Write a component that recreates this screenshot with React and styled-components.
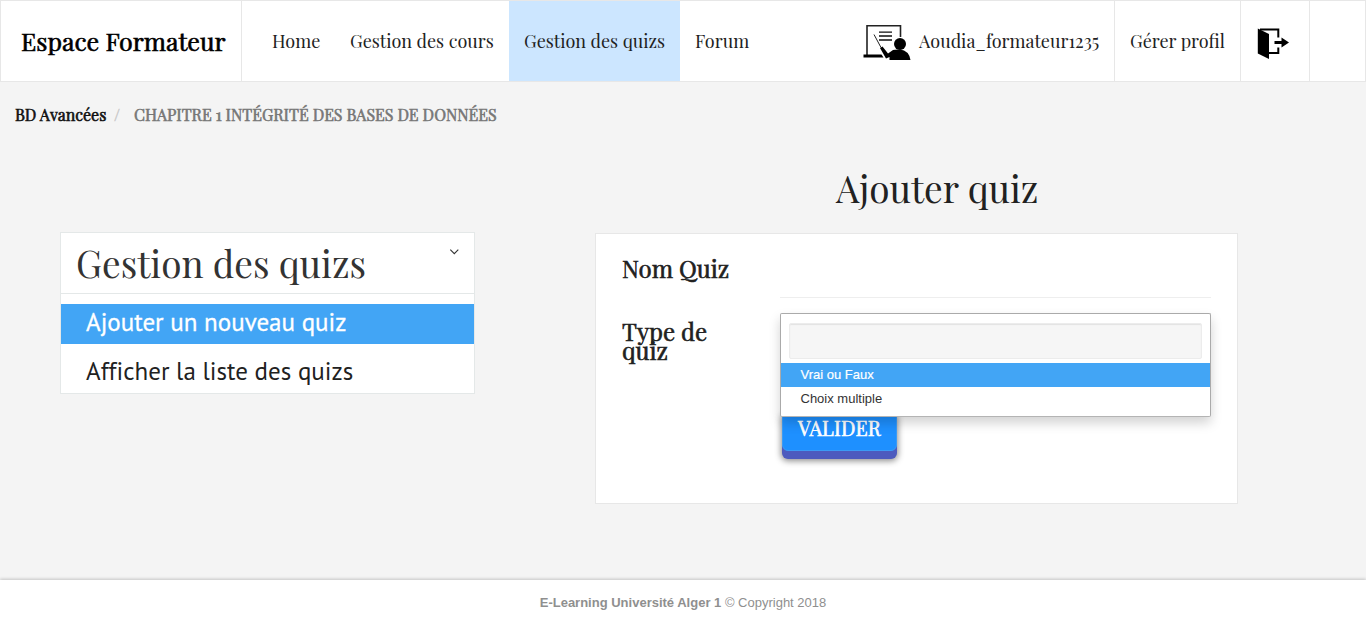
import React from "react";
import styled, { createGlobalStyle, css } from "styled-components";

const serif = `"Playfair Display", "Liberation Serif", serif`;
const sans = `"Liberation Sans", Arial, sans-serif`;
const line = "#e7e7e7";
const blue = "#42a5f5";

const Global = createGlobalStyle`
  * { box-sizing: border-box; }
  body { margin: 0; background: #f4f4f4; font-family: ${sans}; overflow: hidden; }
`;

const strong = css`
  -webkit-text-stroke: 0.6px currentColor;
`;

const Page = styled.div`
  height: 625px;
  display: flex;
  flex-direction: column;
`;

const Navbar = styled.header`
  display: flex;
  height: 82px;
  flex: none;
  background: #fff;
  border: 1px solid ${line};
  font-family: ${serif};
  color: #222;
`;

const Brand = styled.div`
  width: 241px;
  padding-left: 20px;
  border-right: 1px solid ${line};
  font-size: 25px;
  line-height: 80px;
  color: #000;
  white-space: nowrap;
  ${strong}
`;

const Nav = styled.nav`
  display: flex;
  flex: 1;
  padding-left: 15px;
`;

const NavItem = styled.a`
  width: ${(p) => p.$width}px;
  padding-left: 15px;
  font-size: 18px;
  line-height: 80px;
  white-space: nowrap;
  background: ${(p) => (p.$active ? "#cce6ff" : "transparent")};
`;

const UserArea = styled.div`
  display: flex;
`;

const UserCell = styled.div`
  display: flex;
  align-items: center;
  width: ${(p) => p.$width}px;
  padding-left: ${(p) => p.$pad || 0}px;
  gap: 8px;
  border-right: ${(p) => (p.$last ? 0 : 1)}px solid ${line};
  font-size: 18px;
  line-height: 80px;
  white-space: nowrap;

  svg {
    flex: none;
    margin-top: 4px;
  }
`;

const Breadcrumb = styled.div`
  display: flex;
  height: 68px;
  padding: 0 15px;
  font: 16px/65px ${serif};
  white-space: nowrap;
`;

const CrumbLink = styled.a`
  width: 99px;
  color: #111;
  ${strong}
`;

const Separator = styled.span`
  width: 20px;
  color: #ccc;
  ${strong}
`;

const CrumbCurrent = styled.span`
  color: #777;
  ${strong}
`;

const Main = styled.main`
  display: grid;
  grid-template-columns: 415px 643px;
  column-gap: 120px;
  padding-left: 60px;
  flex: 1;
  align-content: start;
  align-items: start;
`;

const SidePanel = styled.aside`
  margin-top: 82px;
  height: 162px;
  background: #fff;
  border: 1px solid #e4e8e8;
`;

const PanelHead = styled.div`
  display: flex;
  justify-content: space-between;
  height: 61px;
  padding: 0 14px 0 15px;
  border-bottom: 1px solid #e4e8e8;
  margin-bottom: 10px;
`;

const PanelTitle = styled.h2`
  margin: 0;
  font: 400 37px/60px ${serif};
  color: #333;
`;

const Chevron = styled.svg`
  width: 11px;
  height: 8px;
  margin-top: 15px;
`;

const MenuItem = styled.a`
  display: block;
  height: 40px;
  margin-bottom: 9px;
  padding-left: 25px;
  font: 25px/37px "PT Sans", "Noto Sans", sans-serif;
  font-variant-ligatures: none;
  white-space: nowrap;
  color: ${(p) => (p.$active ? "#fff" : "#212121")};
  background: ${(p) => (p.$active ? blue : "#fff")};
  ${(p) => p.$active && "-webkit-text-stroke: 0.3px #fff;"}
`;

const Content = styled.section`
  display: flex;
  flex-direction: column;
`;

const Title = styled.h1`
  margin: 0;
  height: 83px;
  padding-left: 241px;
  font: 400 37px/76px ${serif};
  color: #212121;
`;

const Card = styled.form`
  height: 271px;
  padding: 26px;
  background: #fff;
  border: 1px solid ${line};
`;

const Field = styled.div`
  display: grid;
  grid-template-columns: 158px 431px;
  height: ${(p) => p.$height}px;
`;

const Label = styled.label`
  width: 110px;
  margin-top: -1px;
  font: 24px/19px ${serif};
  color: #212121;
  ${strong}
`;

const TextInput = styled.input`
  height: 38px;
  padding: 0;
  border: 0;
  border-bottom: 1px solid #eee;
  background: transparent;
  outline: none;
`;

const Select = styled.div`
  position: relative;
`;

const Dropdown = styled.div`
  position: absolute;
  z-index: 2;
  top: -10px;
  left: 0;
  width: 431px;
  height: 104px;
  padding-top: 9px;
  background: #fff;
  border: 1px solid #aaa;
  border-bottom-color: #b4b4b4;
  border-radius: 2px;
  box-shadow: 0 6px 12px rgba(0, 0, 0, 0.175);
`;

const Search = styled.input`
  display: block;
  width: 413px;
  height: 36px;
  margin: 0 8px 4px;
  border: 1px solid #ececec;
  border-radius: 2px;
  background: #f6f6f6;
  box-shadow: inset 0 1px 1px rgba(0, 0, 0, 0.08);
  outline: none;
`;

const Option = styled.div`
  height: 24px;
  padding-left: 19.5px;
  font: 13px/23px ${sans};
  color: ${(p) => (p.$active ? "#fff" : "#333")};
  background: ${(p) => (p.$active ? blue : "#fff")};
  ${(p) => p.$active && "-webkit-text-stroke: 0.2px #fff;"}
`;

const Submit = styled.button`
  display: block;
  width: 115px;
  height: 46px;
  margin-left: 160px;
  padding: 0;
  border: 1px solid #3b9bf5;
  border-radius: 6px;
  background: #1e90ff;
  color: #fff;
  font: 20px/44px ${serif};
  letter-spacing: 0.2px;
  box-shadow: 0 8px 0 #4d5bbe, 0 9px 6px 1px rgba(0, 0, 0, 0.45);
  ${strong}
`;

const Footer = styled.footer`
  flex: none;
  height: 45px;
  background: #fff;
  box-shadow: 0 -1px 3px rgba(0, 0, 0, 0.2);
  text-align: center;
  font: 13px/45px ${sans};
  color: #8f8f8f;
`;

const TeacherIcon = () => (
  <svg width="48" height="36" viewBox="0 0 48 36">
    <path d="M4 30V0.8H37.5V12" fill="none" stroke="#222" strokeWidth="1.6" />
    <path d="M16 7.2H29M16 11H29M16 15H29" stroke="#111" strokeWidth="1.3" />
    <path d="M0.5 29.5H18.5L20.5 32.5H0.5Z" />
    <path d="M11 9.5L18 22.5" stroke="#222" strokeWidth="1" />
    <path d="M17 23L19.5 21.5L25 28.5L30 25Q32 24.3 37 24.5Q46 25.5 47.5 35H26.5V32L23 33.5Z" />
    <circle cx="37" cy="19" r="6" />
  </svg>
);

const ExitIcon = () => (
  <svg width="33" height="33" viewBox="0 0 33 33">
    <path d="M3 2.5H21.3V10.5M21.3 20.5V26H12" fill="none" stroke="#000" strokeWidth="2" />
    <path d="M0.8 1.5L12 7V32L0.8 26.5Z" />
    <path d="M17.5 14H24.5V10.5L32 15.5L24.5 20.5V17H17.5Z" />
  </svg>
);

export default function App() {
  return (
    <Page>
      <Global />
      <Navbar>
        <Brand>Espace Formateur</Brand>
        <Nav>
          <NavItem $width={78}>Home</NavItem>
          <NavItem $width={174}>Gestion des cours</NavItem>
          <NavItem $width={171} $active>Gestion des quizs</NavItem>
          <NavItem $width={90}>Forum</NavItem>
        </Nav>
        <UserArea>
          <UserCell $width={252}>
            <TeacherIcon />
            Aoudia_formateur1235
          </UserCell>
          <UserCell $width={126} $pad={15}>Gérer profil</UserCell>
          <UserCell $width={69} $pad={16}><ExitIcon /></UserCell>
          <UserCell $width={55} $last />
        </UserArea>
      </Navbar>
      <Breadcrumb>
        <CrumbLink>BD Avancées</CrumbLink>
        <Separator>/</Separator>
        <CrumbCurrent>CHAPITRE 1 INTÉGRITÉ DES BASES DE DONNÉES</CrumbCurrent>
      </Breadcrumb>
      <Main>
        <SidePanel>
          <PanelHead>
            <PanelTitle>Gestion des quizs</PanelTitle>
            <Chevron viewBox="0 0 11 8">
              <path d="M1.3 1.7L5.3 5.7L9.3 1.7" fill="none" stroke="#333" strokeWidth="1.1" />
            </Chevron>
          </PanelHead>
          <MenuItem $active>Ajouter un nouveau quiz</MenuItem>
          <MenuItem>Afficher la liste des quizs</MenuItem>
        </SidePanel>
        <Content>
          <Title>Ajouter quiz</Title>
          <Card>
            <Field $height={63}>
              <Label>Nom Quiz</Label>
              <TextInput />
            </Field>
            <Field $height={82}>
              <Label>Type de quiz</Label>
              <Select>
                <Dropdown>
                  <Search />
                  <Option $active>Vrai ou Faux</Option>
                  <Option>Choix multiple</Option>
                </Dropdown>
              </Select>
            </Field>
            <Submit type="button">VALIDER</Submit>
          </Card>
        </Content>
      </Main>
      <Footer><b>E-Learning Université Alger 1</b> © Copyright 2018</Footer>
    </Page>
  );
}
